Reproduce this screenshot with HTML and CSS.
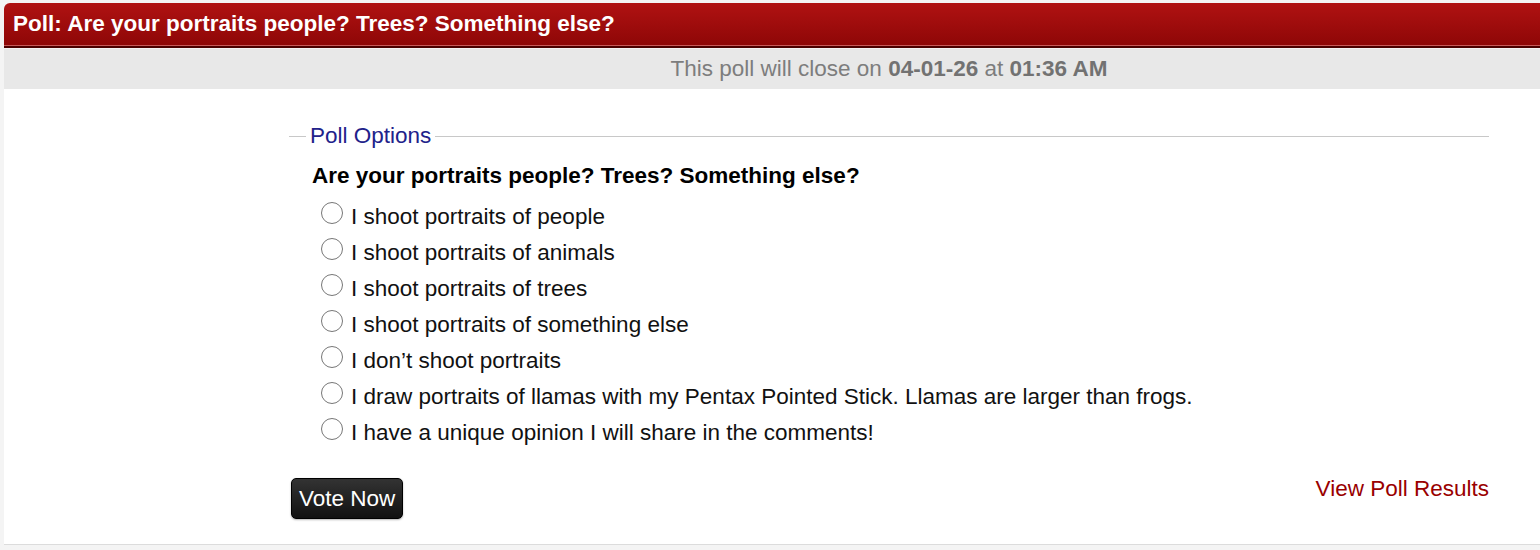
FILE: index.html
```html
<!DOCTYPE html>
<html lang="en">
<head>
<meta charset="utf-8">
<title>Poll</title>
<link rel="stylesheet" href="styles.css">
</head>
<body>
<div class="page">
  <div class="header">Poll: Are your portraits people? Trees? Something else?</div>
  <div class="closebar">This poll will close on <b>04-01-26</b> at <b>01:36 AM</b></div>
  <div class="content">
    <form class="poll">
      <fieldset class="options">
        <legend class="legend">Poll Options</legend>
        <div class="question">Are your portraits people? Trees? Something else?</div>
        <ul class="choices">
          <li><label><input type="radio" name="opt"> I shoot portraits of people</label></li>
          <li><label><input type="radio" name="opt"> I shoot portraits of animals</label></li>
          <li><label><input type="radio" name="opt"> I shoot portraits of trees</label></li>
          <li><label><input type="radio" name="opt"> I shoot portraits of something else</label></li>
          <li><label><input type="radio" name="opt"> I don’t shoot portraits</label></li>
          <li><label><input type="radio" name="opt"> I draw portraits of llamas with my Pentax Pointed Stick. Llamas are larger than frogs.</label></li>
          <li><label><input type="radio" name="opt"> I have a unique opinion I will share in the comments!</label></li>
        </ul>
        <div class="actions">
          <button type="button" class="vote">Vote Now</button>
          <a class="results" href="#">View Poll Results</a>
        </div>
      </fieldset>
    </form>
  </div>
</div>
</body>
</html>
```

FILE: styles.css
```css
html, body {
  margin: 0;
  padding: 0;
}
body {
  background: #f4f4f4;
  overflow: hidden;
  font-family: "Liberation Sans", Arial, sans-serif;
}
.page {
  margin-left: 4px;
  padding-top: 3px;
}
.header {
  height: 42px;
  line-height: 42px;
  padding-left: 9px;
  color: #fff;
  font-size: 22.5px;
  font-weight: bold;
  white-space: nowrap;
  background: linear-gradient(#b01212, #8e0707);
  border-radius: 6px 0 0 0;
  border-bottom: 1px solid #c65a5a;
  box-shadow: 0 2px 0 #4a0000;
}
.closebar {
  margin-top: 3px;
  height: 40px;
  line-height: 40px;
  padding-left: 234px;
  background: #e8e8e8;
  color: #7d7d7d;
  font-size: 22.5px;
  text-align: center;
}
.closebar b {
  color: #727272;
}
.content {
  background: #fff;
  height: 421px;
  padding-top: 34px;
  padding-left: 234px;
  border-bottom: 1px solid #dcdcdc;
}
.options {
  width: 1200px;
  margin: 0 auto;
  padding: 0;
  border: none;
  border-top: 1px solid #c8c8c8;
  min-width: 0;
  box-sizing: border-box;
}
.legend {
  margin-left: 17px;
  padding: 0 4px;
  color: #22228a;
  font-size: 22.5px;
  line-height: 26px;
}
.question {
  margin: 14px 0 0 23px;
  font-size: 22.5px;
  line-height: 26px;
  font-weight: bold;
  color: #000;
}
.choices {
  list-style: none;
  margin: 10px 0 0 32px;
  padding: 0;
}
.choices li {
  height: 36px;
  line-height: 36px;
  font-size: 22.5px;
  color: #111;
}
.choices label {
  display: flex;
  align-items: center;
}
.choices input {
  appearance: none;
  -webkit-appearance: none;
  width: 22px;
  height: 22px;
  margin: 0 8px 0 0;
  position: relative;
  top: -4px;
  border: 1.5px solid #777;
  border-radius: 50%;
  background: #fff;
  box-sizing: border-box;
}
.actions {
  display: flex;
  justify-content: space-between;
  align-items: flex-start;
  margin-top: 27px;
}
.vote {
  margin-left: 2px;
  height: 41px;
  padding: 0 7px;
  font-family: "Liberation Sans", Arial, sans-serif;
  font-size: 22.5px;
  color: #fff;
  background: linear-gradient(#333, #111);
  border: 1px solid #000;
  border-radius: 5px;
  box-shadow: 0 1px 2px rgba(0,0,0,0.3);
}
.results {
  margin-top: -2px;
  font-size: 22.5px;
  line-height: 26px;
  color: #990000;
  text-decoration: none;
}
```
